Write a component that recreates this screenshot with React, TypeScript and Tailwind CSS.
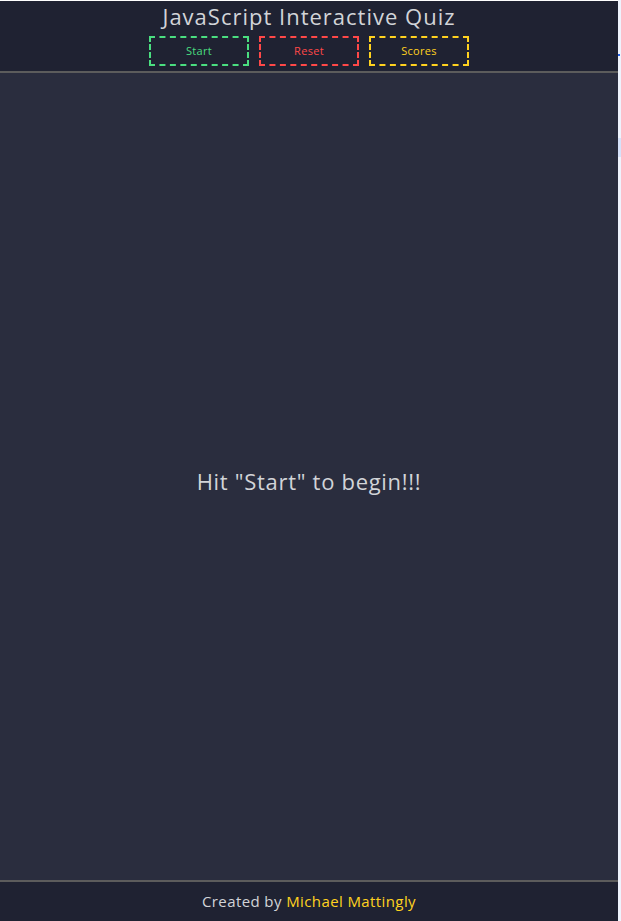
import React from "react";

export default function App() {
  const font = { fontFamily: '"Open Sans", "DejaVu Sans", sans-serif' };
  return (
    <div className="flex h-[921px] w-[621px] bg-[#eef3fd]" style={font}>
      <div className="flex w-[618px] flex-col pt-px bg-white">
        <header className="flex h-[70px] flex-col items-center bg-[#1f2232]">
          <h1 className="mt-0 text-[22px] leading-[30px] tracking-[1px] text-[#d2d4d8]">
            JavaScript Interactive Quiz
          </h1>
          <div className="mt-[5px] flex gap-[10px]">
            <button className="flex h-[30px] w-[100px] items-center justify-center border-2 border-dashed border-[#4ade80] text-[11px] tracking-[0.3px] text-[#4ade80]">
              Start
            </button>
            <button className="flex h-[30px] w-[100px] items-center justify-center border-2 border-dashed border-[#ff4848] text-[11px] tracking-[0.3px] text-[#ff4848]">
              Reset
            </button>
            <button className="flex h-[30px] w-[100px] items-center justify-center border-2 border-dashed border-[#ffd21f] text-[11px] tracking-[0.3px] text-[#ffd21f]">
              Scores
            </button>
          </div>
        </header>
        <div className="h-[2px] bg-[#5c5c5c]" />
        <main className="flex flex-1 items-center justify-center bg-[#2a2d3e]">
          <p className="mt-[10px] text-[22px] tracking-[0.7px] text-[#d2d4d8]">Hit "Start" to begin!!!</p>
        </main>
        <div className="h-[2px] bg-[#5c5c5c]" />
        <footer className="flex h-[39px] items-center justify-center bg-[#1f2232] text-[15px] tracking-[0.4px] text-[#d2d4d8]">
          <span>
            Created by <span className="text-[#ffd21f]">Michael Mattingly</span>
          </span>
        </footer>
      </div>
      <div className="flex w-[3px] flex-col">
        <div className="h-[54px]" />
        <div className="h-[2px] w-[2px] bg-[#2563eb]" />
        <div className="h-[82px]" />
        <div className="h-[19px] bg-[#d6e2fa]" />
      </div>
    </div>
  );
}
